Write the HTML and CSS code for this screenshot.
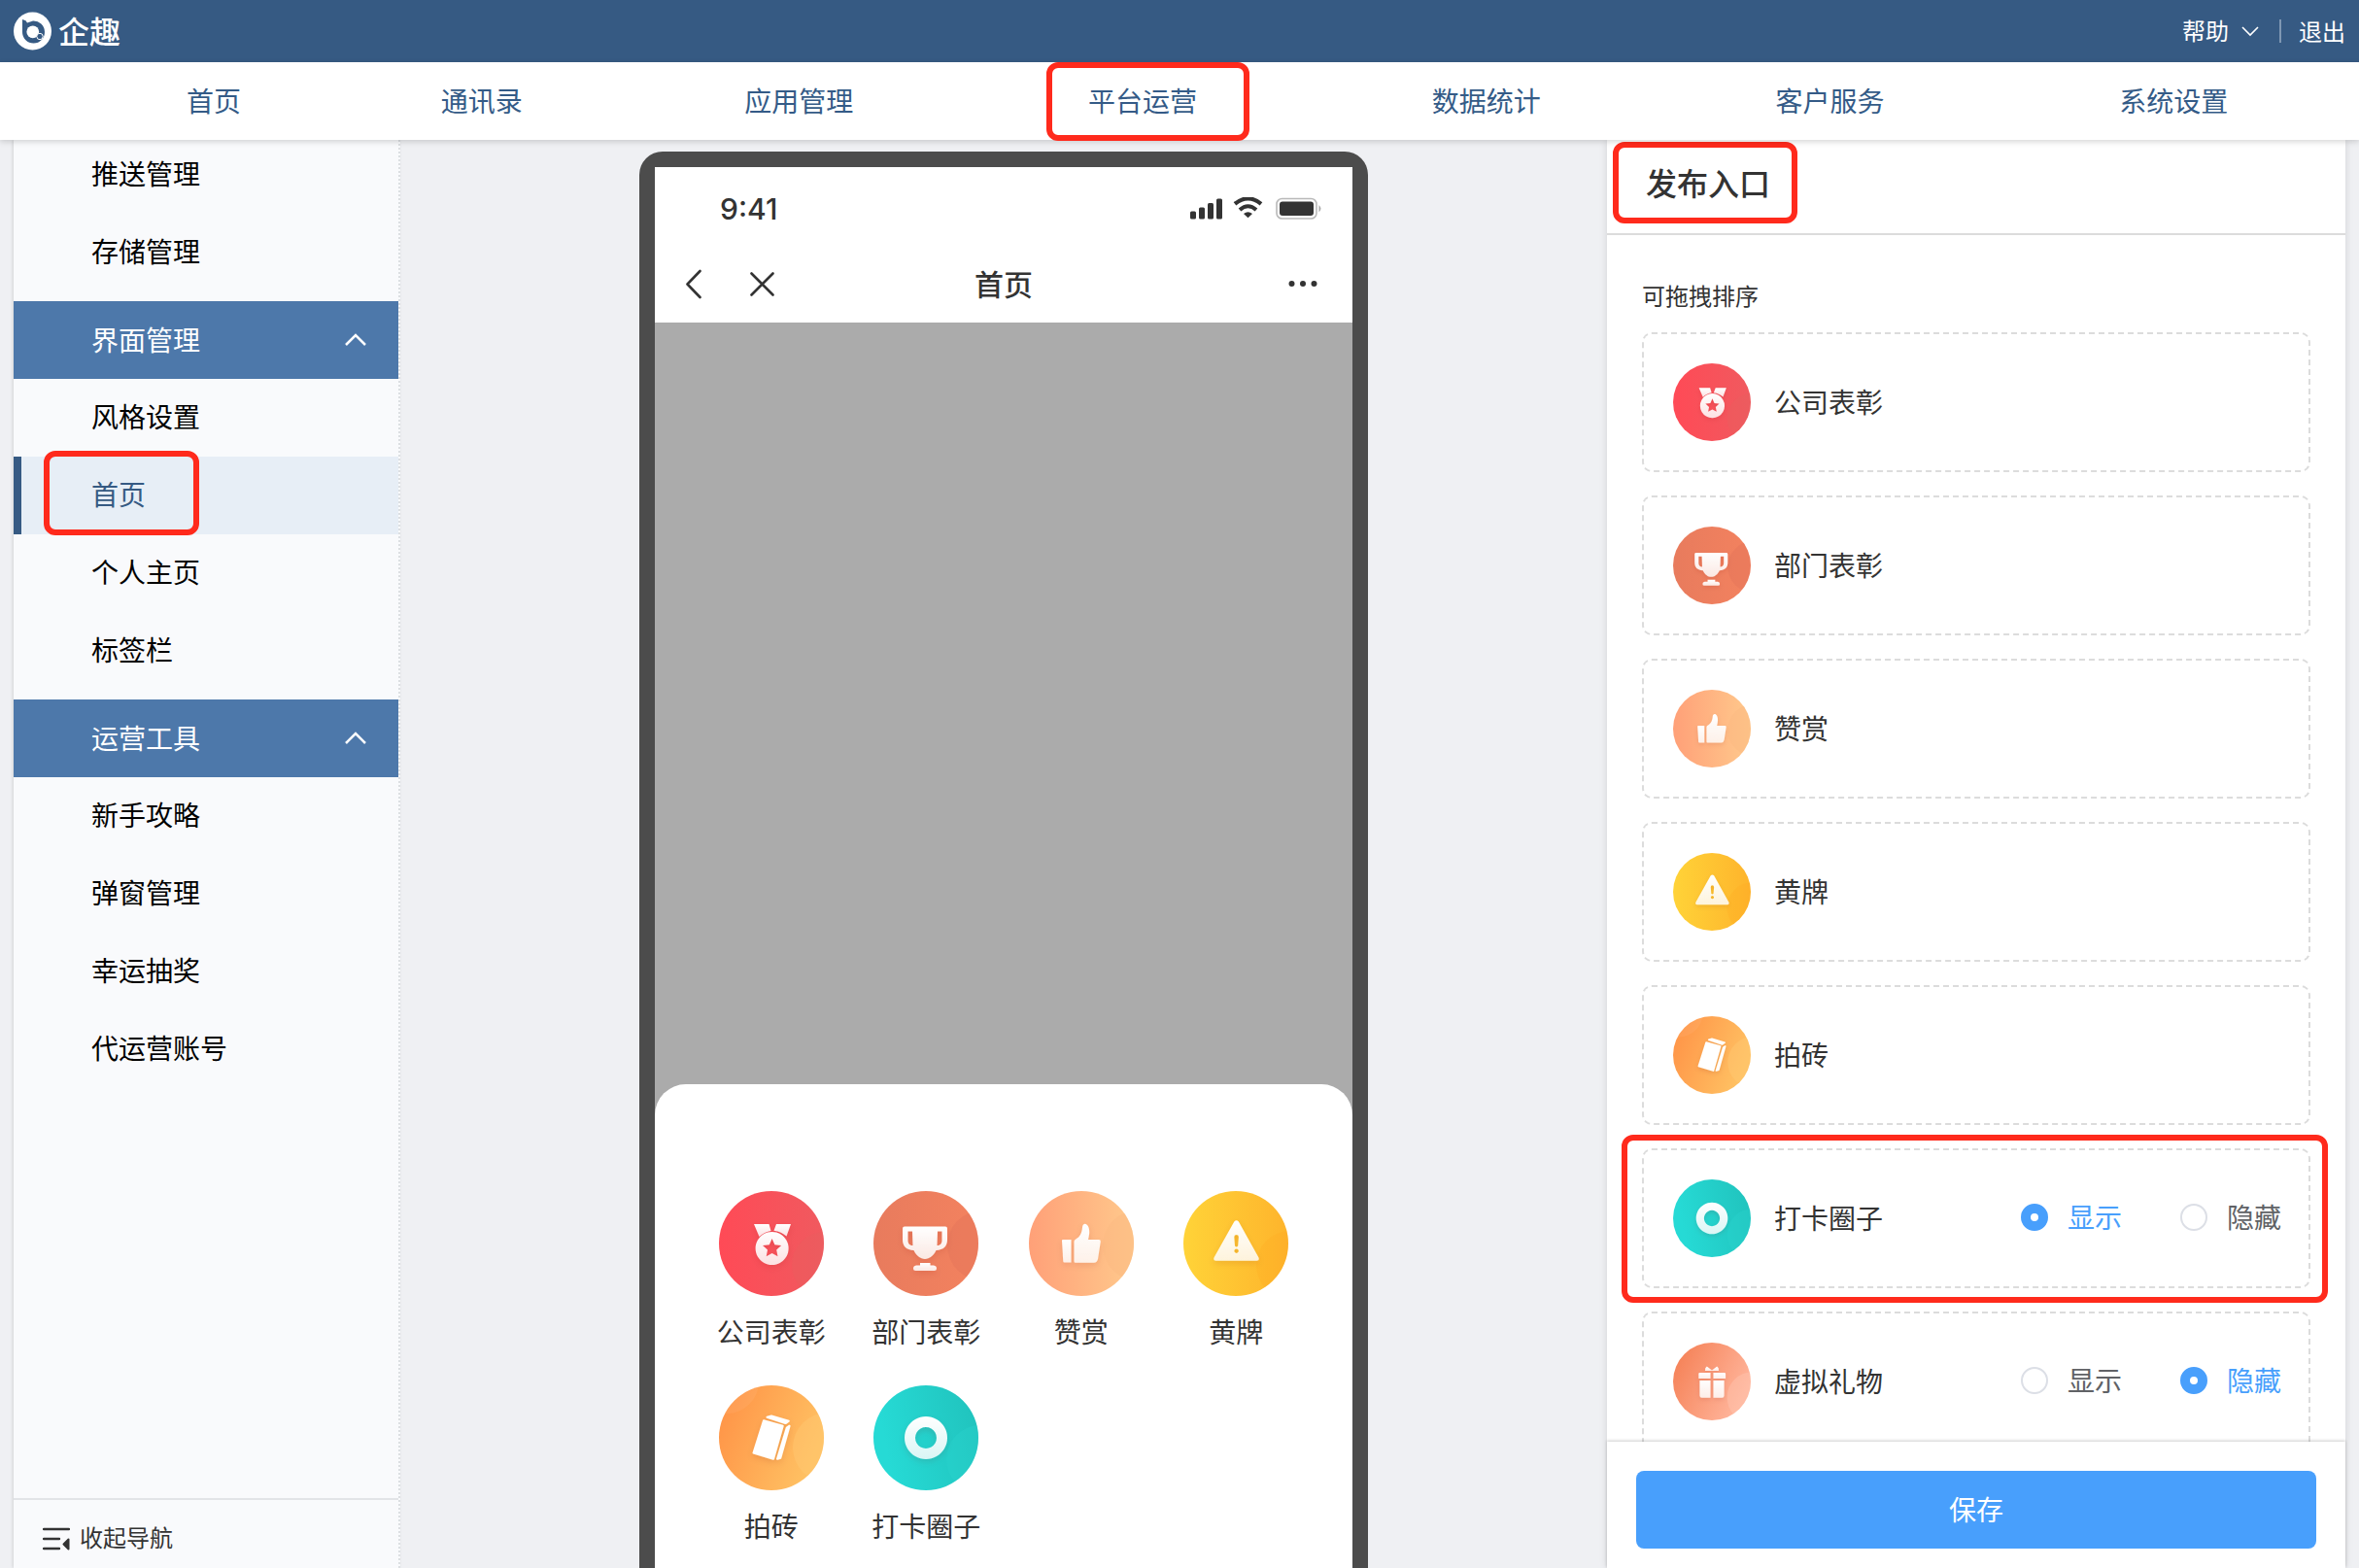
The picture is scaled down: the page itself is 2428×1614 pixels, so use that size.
FILE: index.html
```html
<!DOCTYPE html>
<html lang="zh-CN">
	<head>
		<meta charset="UTF-8">
		<meta name="viewport" content="width=device-width, initial-scale=1.0">
		<title>企趣</title>
		<link rel="stylesheet" href="styles.css">
	</head>
	<body>
		<!-- icon sprite -->
		<svg class="sprite" width="0" height="0" aria-hidden="true">
			<defs>
				<linearGradient id="bg-red"><stop offset="0" stop-color="#ff4a56"/><stop offset="1" stop-color="#f05a5f"/></linearGradient>
				<linearGradient id="bg-brick"><stop offset="0" stop-color="#e87b5d"/><stop offset="1" stop-color="#f3825f"/></linearGradient>
				<linearGradient id="bg-peach"><stop offset="0" stop-color="#ffa078"/><stop offset="1" stop-color="#ffc98c"/></linearGradient>
				<linearGradient id="bg-yellow"><stop offset="0" stop-color="#ffd338"/><stop offset="1" stop-color="#feb42c"/></linearGradient>
				<linearGradient id="bg-orange" x2="1" y2=".4"><stop offset="0" stop-color="#ff9045"/><stop offset="1" stop-color="#ffc062"/></linearGradient>
				<linearGradient id="bg-teal" x2="1" y2="-.2"><stop offset="0" stop-color="#26dad5"/><stop offset="1" stop-color="#20c1bb"/></linearGradient>
				<linearGradient id="bg-gift" x2="1" y2=".5"><stop offset="0" stop-color="#f47c50"/><stop offset="1" stop-color="#ffb49a"/></linearGradient>
				<linearGradient id="fg" x2="0" y2="1"><stop offset="0" stop-color="#fff"/><stop offset="1" stop-color="#fff" stop-opacity=".82"/></linearGradient>
				<clipPath id="disc"><circle cx="54" cy="54" r="54"/></clipPath>
				<filter id="drop" x="-30%" y="-30%" width="160%" height="170%"><feDropShadow dx="0" dy="3" stdDeviation="3" flood-color="#700" flood-opacity=".12"/></filter>
			</defs>
			<symbol id="i-medal" viewBox="0 0 108 108">
				<circle cx="54" cy="54" r="54" fill="url(#bg-red)"/>
				<circle cx="109" cy="76" r="34" fill="#e8605f" opacity=".4" clip-path="url(#disc)"/>
				<g fill="url(#fg)" filter="url(#drop)">
					<path d="M36 34h15.500l2 7C49 41.500 45 43.500 41.500 47zM59 34h15l-4.500 12.500C66 43.500 62 41.500 56.500 40.800z"/>
					<path fill-rule="evenodd" d="M54.600 42a17 17 0 1 0 .01 0zM54.600 49l2.800 6.200 6.800.8-5 4.600 1.300 6.700-5.900-3.300-5.900 3.300 1.300-6.700-5-4.600 6.800-.8z"/>
				</g>
			</symbol>
			<symbol id="i-trophy" viewBox="0 0 108 108">
				<circle cx="54" cy="54" r="54" fill="url(#bg-brick)"/>
				<circle cx="112" cy="56" r="36" fill="#e0705a" opacity=".35" clip-path="url(#disc)"/>
				<g fill="url(#fg)" filter="url(#drop)">
					<path fill-rule="evenodd" d="M32 36.500h42q2 0 2 2V50c0 7-4 10.500-11.500 11C62 66.500 57.500 70 53 70s-9-3.500-11.500-9C34 60.500 30 57 30 50V38.500q0-2 2-2zM35.500 41.500V51c0 3 2 5 5 5l-.5-14.500zM70.500 41.500H66L65.500 56c3 0 5-2 5-5z"/>
					<path d="M48 74h10.500v2.500H62q3 .5 3 3t-2.500 2.500h-19q-2.500 0-2.500-2.500t3-3h4z"/>
				</g>
			</symbol>
			<symbol id="i-thumb" viewBox="0 0 108 108">
				<circle cx="54" cy="54" r="54" fill="url(#bg-peach)"/>
				<circle cx="112" cy="56" r="36" fill="#fbb981" opacity=".5" clip-path="url(#disc)"/>
				<g fill="url(#fg)" filter="url(#drop)">
					<path d="M35 50h8.500v23.500h-7q-1 0-1.200-1L34 51q0-1 1-1z"/>
					<path d="M46.500 52q0-1.500 1.500-2.300c5-2.700 6.500-7 7-12.200.3-3.500 2.500-4.500 4.500-3 3 2.500 3.500 8 1.500 15.500h11q2 0 1.800 2L71 70q-.8 3.700-4 3.700H48q-1.500 0-1.500-1.500z"/>
				</g>
			</symbol>
			<symbol id="i-warn" viewBox="0 0 108 108">
				<circle cx="54" cy="54" r="54" fill="url(#bg-yellow)"/>
				<circle cx="110" cy="76" r="35" fill="#ffa51f" opacity=".2" clip-path="url(#disc)"/>
				<path fill="url(#fg)" filter="url(#drop)" fill-rule="evenodd" d="M52.300 31.500q2.300-2.500 4.600 0L77.500 68.500q1 3-1.800 3.300H33.300q-2.800-.3-1.800-3.300zM54.600 45q-2.400 0-2.300 2.500l.7 9q1.600 2 3.200 0l.7-9q.1-2.500-2.300-2.500zM54.600 59.500a2.200 2.200 0 1 0 .01 0z"/>
			</symbol>
			<symbol id="i-brick" viewBox="0 0 108 108">
				<circle cx="54" cy="54" r="54" fill="url(#bg-orange)"/>
				<g clip-path="url(#disc)">
					<circle cx="112" cy="64" r="36" fill="#ffcb75" opacity=".4"/>
					<circle cx="8" cy="-4" r="33" fill="#fff" opacity=".06"/>
				</g>
				<g fill="#fff" stroke="#fff" stroke-width="2" stroke-linejoin="round" filter="url(#drop)">
					<path d="M46 36.300l19.700 5.500-9.700 34-20.500-6.200z"/>
					<path d="M49.500 32.800l4.500-1.300 17.800 5.300-3.300 2.300z"/>
					<path d="M69.800 43.500l2.800-1.800-9.300 33-3.300 1z"/>
				</g>
			</symbol>
			<symbol id="i-ring" viewBox="0 0 108 108">
				<circle cx="54" cy="54" r="54" fill="url(#bg-teal)"/>
				<circle cx="110" cy="76" r="35" fill="#2bd5cf" opacity=".35" clip-path="url(#disc)"/>
				<path fill="url(#fg)" filter="url(#drop)" fill-rule="evenodd" d="M54 32a22 22 0 1 0 .01 0zM54 43a11 11 0 1 1-.01 0z"/>
			</symbol>
			<symbol id="i-gift" viewBox="0 0 108 108">
				<circle cx="54" cy="54" r="54" fill="url(#bg-gift)"/>
				<circle cx="110" cy="76" r="35" fill="#ffc9b4" opacity=".4" clip-path="url(#disc)"/>
				<g fill="url(#fg)" filter="url(#drop)">
					<path d="M47 33l7 5.500 7-5.500q3 2 2.500 6H44.500q-.5-4 2.500-6z"/>
					<path d="M37 42h15v8H35.500v-6.500q0-1.500 1.500-1.500zM56 42h15.500q1.500 0 1.500 1.500V50H56z"/>
					<path d="M37 52.500h15v24H40q-3 0-3-3zM56 52.500h15v21q0 3-3 3H56z"/>
				</g>
			</symbol>
		</svg>

		<header class="topbar">
			<a class="logo" href="#">
				<svg width="40" height="40" viewBox="0 0 40 40" aria-hidden="true">
					<circle cx="19.500" cy="20" r="19.500" fill="#fff"/>
					<path d="M9 8l3.500 1.200L14 11.500 20 9.500a11.500 11.500 0 1 1-11 11.500z" fill="#365a83"/>
					<circle cx="19.800" cy="20.800" r="6.400" fill="#fff"/>
					<path d="M23 23l4 3" stroke="#fff" stroke-width="2"/>
					<circle cx="27" cy="25.500" r="3.200" fill="#365a83" stroke="#fff"/>
				</svg>
				<span>企趣</span>
			</a>
			<div class="topbar-right">
				<button class="help" type="button"><span>帮助</span>
					<svg width="20" height="12" viewBox="0 0 20 12" aria-hidden="true"><path d="M2 2l8 8 8-8" fill="none" stroke="#fff" stroke-width="1.600"/></svg>
				</button>
				<i class="divider"></i>
				<a class="logout" href="#">退出</a>
			</div>
		</header>

		<nav class="mainnav">
			<a href="#">首页</a>
			<a href="#">通讯录</a>
			<a href="#">应用管理</a>
			<a href="#"><span class="marked">平台运营<i class="mark mark-nav"></i></span></a>
			<a href="#">数据统计</a>
			<a href="#">客户服务</a>
			<a href="#">系统设置</a>
		</nav>

		<div class="main">
			<aside class="sidebar">
				<div class="menu">
					<a class="item" href="#">推送管理</a>
					<a class="item" href="#">存储管理</a>
					<button class="group" type="button"><span>界面管理</span>
						<svg width="24" height="16" viewBox="0 0 24 16" aria-hidden="true"><path d="M2 13L12 3l10 10" fill="none" stroke="#fff" stroke-width="2.500"/></svg>
					</button>
					<a class="item" href="#">风格设置</a>
					<a class="item active" href="#">首页<i class="mark mark-item"></i></a>
					<a class="item" href="#">个人主页</a>
					<a class="item" href="#">标签栏</a>
					<button class="group" type="button"><span>运营工具</span>
						<svg width="24" height="16" viewBox="0 0 24 16" aria-hidden="true"><path d="M2 13L12 3l10 10" fill="none" stroke="#fff" stroke-width="2.500"/></svg>
					</button>
					<a class="item" href="#">新手攻略</a>
					<a class="item" href="#">弹窗管理</a>
					<a class="item" href="#">幸运抽奖</a>
					<a class="item" href="#">代运营账号</a>
				</div>
				<button class="collapse" type="button">
					<svg width="28" height="24" viewBox="0 0 28 24" aria-hidden="true">
						<path d="M1 2h26M1 12h16M1 22h16" stroke="#333" stroke-width="2.400" stroke-linecap="round"/>
						<path d="M26.500 12.500v10l-5-5z" fill="#333" stroke="#333" stroke-width="2" stroke-linejoin="round"/>
					</svg>
					<span>收起导航</span>
				</button>
			</aside>

			<main class="preview">
				<div class="phone">
					<div class="screen">
						<div class="status">
							<span>9:41</span>
							<svg width="136" height="24" viewBox="0 0 136 24" fill="#333" aria-hidden="true">
								<rect x="0" y="14.500" width="6" height="8" rx="1.500"/>
								<rect x="9" y="10.500" width="6" height="12" rx="1.500"/>
								<rect x="18" y="6" width="6" height="16.500" rx="1.500"/>
								<rect x="27" y="1.500" width="6" height="21" rx="1.500"/>
								<path d="M46 6.800Q59.500-4 73 6.800" fill="none" stroke="#333" stroke-width="4.200"/>
								<path d="M51 13q8.500-7.500 17 0" fill="none" stroke="#333" stroke-width="4"/>
								<path d="M55 17q4.500-3.500 9 0l-4.500 4.300z"/>
								<rect x="89" y="1.500" width="41" height="20.500" rx="5.500" fill="none" stroke="#b9b9b9" stroke-width="1.600"/>
								<rect x="92" y="4.500" width="35" height="14.500" rx="3"/>
								<path d="M132.500 8v7.500q4-3.700 0-7.500z" fill="#aaa"/>
							</svg>
						</div>
						<div class="titlebar">
							<svg width="92" height="32" viewBox="0 0 92 32" fill="none" stroke="#333" stroke-width="2.600" stroke-linecap="round" stroke-linejoin="round" aria-hidden="true">
								<path d="M14.500 3L1.500 16.500l13 13.500M67.500 5.500l22 22M89.500 5.500l-22 22"/>
							</svg>
							<h2>首页</h2>
							<svg class="more" width="34" height="8" viewBox="0 0 34 8" fill="#333" aria-hidden="true">
								<circle cx="3.500" cy="4" r="3"/><circle cx="15" cy="4" r="3"/><circle cx="26.500" cy="4" r="3"/>
							</svg>
						</div>
						<div class="mask">
							<div class="sheet">
								<div class="entry"><svg><use href="#i-medal"/></svg><span>公司表彰</span></div>
								<div class="entry"><svg><use href="#i-trophy"/></svg><span>部门表彰</span></div>
								<div class="entry"><svg><use href="#i-thumb"/></svg><span>赞赏</span></div>
								<div class="entry"><svg><use href="#i-warn"/></svg><span>黄牌</span></div>
								<div class="entry"><svg><use href="#i-brick"/></svg><span>拍砖</span></div>
								<div class="entry"><svg><use href="#i-ring"/></svg><span>打卡圈子</span></div>
							</div>
						</div>
					</div>
				</div>
			</main>

			<section class="panel">
				<div class="panel-head">
					<h1 class="marked">发布入口<i class="mark mark-title"></i></h1>
				</div>
				<div class="panel-body">
					<p class="tip">可拖拽排序</p>
					<div class="cards">
						<div class="card"><svg><use href="#i-medal"/></svg><span>公司表彰</span></div>
						<div class="card"><svg><use href="#i-trophy"/></svg><span>部门表彰</span></div>
						<div class="card"><svg><use href="#i-thumb"/></svg><span>赞赏</span></div>
						<div class="card"><svg><use href="#i-warn"/></svg><span>黄牌</span></div>
						<div class="card"><svg><use href="#i-brick"/></svg><span>拍砖</span></div>
						<div class="card">
							<svg><use href="#i-ring"/></svg><span>打卡圈子</span>
							<div class="radios">
								<label><input type="radio" name="circle" checked><span>显示</span></label>
								<label><input type="radio" name="circle"><span>隐藏</span></label>
							</div>
							<i class="mark mark-card"></i>
						</div>
						<div class="card">
							<svg><use href="#i-gift"/></svg><span>虚拟礼物</span>
							<div class="radios">
								<label><input type="radio" name="gift"><span>显示</span></label>
								<label><input type="radio" name="gift" checked><span>隐藏</span></label>
							</div>
						</div>
					</div>
				</div>
				<div class="panel-foot">
					<button class="save" type="button">保存</button>
				</div>
			</section>
		</div>
	</body>
</html>
```
FILE: styles.css
```css
* {
	box-sizing: border-box;
}

body {
	margin: 0;
	height: 100vh;
	display: flex;
	flex-direction: column;
	overflow: hidden;
	background: #eff0f3;
	color: #333;
	font-family: "Noto Sans CJK SC", sans-serif;
	font-size: 28px;
	line-height: 40px;
}

a {
	color: inherit;
	text-decoration: none;
}

button {
	border: 0;
	background: none;
	color: inherit;
	font: inherit;
	text-align: left;
	cursor: pointer;
}

h1, h2, p {
	margin: 0;
}

svg {
	flex: none;
}

.sprite {
	position: absolute;
}

/* the CJK face sits low in its line, lift labels set beside icons */
.logo span,
.help span,
.group span,
.collapse span,
.titlebar h2,
.card span {
	padding-bottom: 3px;
}

/* red highlight frames */
.marked {
	position: relative;
}

.mark {
	position: absolute;
	border: 6px solid #ff2a1c;
	border-radius: 12px;
	pointer-events: none;
}

.mark-nav {
	top: -19px;
	right: -54px;
	bottom: -22px;
	left: -43px;
}

.mark-item {
	top: -6px;
	left: 31px;
	width: 160px;
	height: 87px;
}

.mark-title {
	top: 2px;
	right: -28px;
	bottom: 0;
	left: -34px;
}

.mark-card {
	top: -16px;
	right: -20px;
	bottom: -17px;
	left: -23px;
}

/* top bar */
.topbar {
	flex: none;
	height: 64px;
	padding: 0 14px;
	display: flex;
	align-items: center;
	justify-content: space-between;
	background: #365a83;
	color: #fff;
}

.logo {
	display: flex;
	align-items: center;
	gap: 6px;
	font-size: 32px;
	font-weight: 500;
}

.topbar-right {
	display: flex;
	align-items: center;
	font-size: 24px;
}

.help {
	display: flex;
	align-items: center;
	gap: 12px;
	padding: 0;
}

.divider {
	width: 2px;
	height: 24px;
	margin: 0 18px 0 20px;
	background: #7f97b3;
}

/* main nav */
.mainnav {
	flex: none;
	position: relative;
	z-index: 1;
	height: 80px;
	padding: 0 14px 3px 94px;
	display: grid;
	grid-template-columns: 126fr 150fr repeat(5, 177fr);
	align-items: center;
	background: #fff;
	color: #345b87;
	text-align: center;
	box-shadow: 0 2px 6px rgba(0, 0, 0, .16);
}

.mainnav .marked {
	display: inline-block;
}

.main {
	flex: 1;
	min-height: 0;
	display: flex;
	padding: 0 14px;
}

/* sidebar */
.sidebar {
	flex: none;
	width: 398px;
	display: flex;
	flex-direction: column;
	background: #f9fafc;
	border-right: 2px dotted #dcdfe2;
	box-shadow: -1px 0 3px rgba(0, 0, 0, .12);
	color: #000;
}

.menu {
	flex: 1;
	min-height: 0;
	margin-top: -4px;
	overflow: hidden;
}

.item {
	position: relative;
	display: block;
	height: 80px;
	padding-left: 80px;
	line-height: 77px;
}

.active {
	background: #e7eef6;
	color: #365a83;
	box-shadow: inset 8px 0 #365a83;
}

.group {
	width: 100%;
	height: 80px;
	margin-top: 10px;
	padding: 0 32px 0 80px;
	display: flex;
	align-items: center;
	justify-content: space-between;
	background: #4d78aa;
	color: #fff;
}

.collapse {
	flex: none;
	display: flex;
	align-items: center;
	gap: 10px;
	padding: 20px 30px 11px;
	border-top: 2px solid #e2e4e7;
	color: #333;
	font-size: 24px;
	line-height: 36px;
}

/* phone preview */
.preview {
	flex: 1;
	display: flex;
	justify-content: center;
	padding-top: 12px;
}

.phone {
	width: 750px;
	display: flex;
	padding: 16px 16px 0;
	background: #4c4c4c;
	border-radius: 24px 24px 0 0;
}

.screen {
	flex: 1;
	display: flex;
	flex-direction: column;
	background: #fff;
}

.status {
	height: 80px;
	padding: 6px 31px 0 67px;
	display: flex;
	align-items: center;
	justify-content: space-between;
	font-family: Inter, sans-serif;
	font-size: 30px;
	font-weight: 500;
}

.titlebar {
	height: 80px;
	padding: 0 32px;
	display: grid;
	grid-template-columns: 1fr auto 1fr;
	align-items: center;
}

.titlebar h2 {
	font-size: 30px;
	font-weight: 500;
}

.more {
	justify-self: end;
}

.mask {
	flex: 1;
	display: flex;
	flex-direction: column;
	justify-content: flex-end;
	background: #ababab;
}

.sheet {
	padding: 110px 40px 24px;
	display: grid;
	grid-template-columns: repeat(4, 1fr);
	row-gap: 36px;
	background: #fff;
	border-radius: 32px 32px 0 0;
}

.entry {
	display: flex;
	flex-direction: column;
	align-items: center;
	gap: 16px;
}

.entry svg {
	width: 108px;
	height: 108px;
}

/* settings panel */
.panel {
	flex: none;
	width: 760px;
	display: flex;
	flex-direction: column;
	background: #fff;
	box-shadow: 0 0 8px rgba(0, 0, 0, .12);
}

.panel-head {
	flex: none;
	height: 98px;
	padding-left: 40px;
	border-bottom: 2px solid #dcdcdc;
}

.panel-head h1 {
	width: max-content;
	font-size: 32px;
	font-weight: 500;
	line-height: 86px;
}

.panel-body {
	flex: 1;
	min-height: 0;
	padding: 44px 36px 0;
	overflow: hidden;
}

.tip {
	margin-bottom: 20px;
	font-size: 24px;
	line-height: 36px;
}

.cards {
	display: flex;
	flex-direction: column;
	gap: 24px;
}

.card {
	position: relative;
	height: 144px;
	padding: 0 28px 0 30px;
	display: flex;
	align-items: center;
	gap: 24px;
	border: 2px dashed #dcdcdc;
	border-radius: 10px;
}

.card > svg {
	width: 80px;
	height: 80px;
}

.radios {
	margin-left: auto;
	padding-bottom: 2px;
	display: flex;
	gap: 60px;
}

.radios label {
	display: flex;
	align-items: center;
	gap: 20px;
	color: #606266;
}

.radios input {
	appearance: none;
	width: 28px;
	height: 28px;
	margin: 0;
	border: 2px solid #dcdfe6;
	border-radius: 50%;
	background: #fff;
}

.radios input:checked {
	border: 10px solid #489ffc;
}

.radios input:checked + span {
	color: #489ffc;
}

.panel-foot {
	flex: none;
	position: relative;
	padding: 30px 30px 20px;
	background: #fff;
	box-shadow: 0 -1px 3px rgba(0, 0, 0, .2);
}

.save {
	width: 100%;
	height: 80px;
	padding: 0 0 3px;
	border-radius: 8px;
	background: #489ffc;
	color: #fff;
	text-align: center;
}
```
